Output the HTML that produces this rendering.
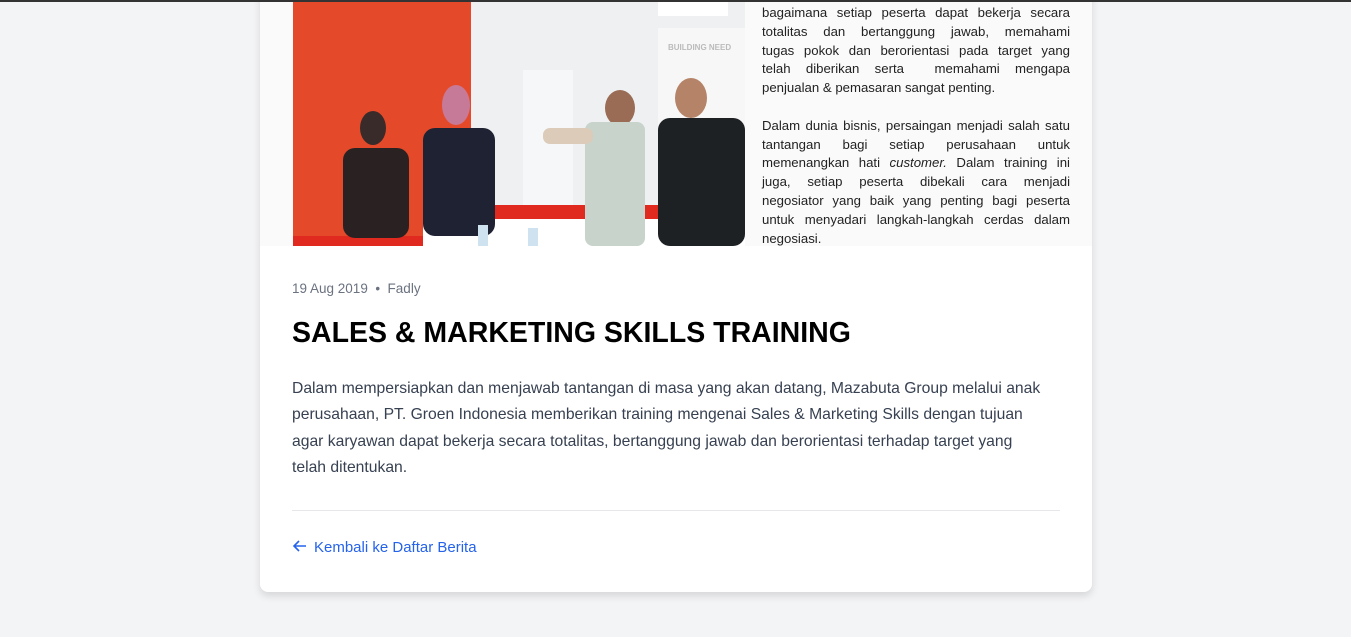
<!DOCTYPE html>
<html><head><meta charset="utf-8"><style>
*{margin:0;padding:0;box-sizing:border-box}
body{width:1351px;height:637px;background:#f3f4f6;font-family:"Liberation Sans",sans-serif;position:relative;overflow:hidden}
.topbar{position:absolute;left:0;top:0;width:1351px;height:2px;background:#333;z-index:5}
.card{position:absolute;left:260px;top:-20px;width:832px;height:612px;background:#fff;border-radius:8px;box-shadow:0 4px 8px rgba(0,0,0,.12);overflow:hidden}
.img{position:absolute;left:0;top:20px;width:832px;height:246px;background:#fafafa}
.photo{position:absolute;left:33px;top:0;width:452px;height:246px;background:#e9ecee;overflow:hidden}
.doc{position:absolute;left:502px;top:4px;width:308px;font-size:13.2px;line-height:18.8px;color:#222;text-align:justify;text-align-last:justify;white-space:nowrap}
.doc div{display:block}
.meta{position:absolute;left:32px;top:301px;font-size:13.5px;color:#6b7280}
h1{position:absolute;left:32px;top:337px;font-size:28.5px;font-weight:700;color:#000;white-space:nowrap}
.body{position:absolute;left:32px;top:396px;font-size:15.7px;line-height:26.3px;color:#374151;white-space:nowrap}
.hr{position:absolute;left:32px;top:530px;width:768px;height:1px;background:#e5e7eb}
.link{position:absolute;left:32px;top:559px;font-size:15px;color:#2563eb}
</style></head><body>
<div class="topbar"></div>
<div class="card">
 <div class="img">
  <div class="photo">
   <svg width="452" height="246" viewBox="0 0 452 246">
    <rect x="0" y="0" width="178" height="246" fill="#e44a2a"/>
    <rect x="178" y="0" width="274" height="246" fill="#eef0f1"/>
    <rect x="365" y="28" width="87" height="160" fill="#f7f7f7"/>
    <text x="375" y="50" font-size="8" font-weight="bold" fill="#bbb" font-family="Liberation Sans">BUILDING NEED</text>
    <rect x="365" y="2" width="70" height="14" fill="#fff"/>
    <rect x="230" y="70" width="50" height="150" fill="#f6f7f8"/>
    <rect x="130" y="215" width="322" height="31" fill="#fff"/>
    <rect x="130" y="205" width="322" height="14" fill="#e02a20"/>
    <rect x="0" y="236" width="130" height="10" fill="#e02a20"/>
    <ellipse cx="80" cy="128" rx="13" ry="17" fill="#3a2b2b"/>
    <rect x="50" y="148" width="66" height="90" rx="12" fill="#2a2222"/>
    <ellipse cx="163" cy="105" rx="14" ry="20" fill="#c77a98"/>
    <rect x="130" y="128" width="72" height="108" rx="12" fill="#1f2233"/>
    <ellipse cx="327" cy="108" rx="15" ry="18" fill="#9a6b55"/>
    <rect x="292" y="122" width="60" height="124" rx="8" fill="#c8d3cc"/>
    <rect x="250" y="128" width="50" height="16" rx="7" fill="#dccbb8"/>
    <ellipse cx="398" cy="98" rx="16" ry="20" fill="#b58368"/>
    <rect x="365" y="118" width="87" height="128" rx="12" fill="#1e2124"/>
    <rect x="185" y="225" width="10" height="21" fill="#cfe2f0"/>
    <rect x="235" y="228" width="10" height="18" fill="#cfe2f0"/>
   </svg>
  </div>
  <div class="doc">
   <div>bagaimana setiap peserta dapat bekerja secara</div>
   <div>totalitas dan bertanggung jawab, memahami</div>
   <div>tugas pokok dan berorientasi pada target yang</div>
   <div>telah diberikan serta &nbsp;memahami mengapa</div>
   <div style="text-align-last:left">penjualan &amp; pemasaran sangat penting.</div>
   <div>&nbsp;</div>
   <div>Dalam dunia bisnis, persaingan menjadi salah satu</div>
   <div>tantangan bagi setiap perusahaan untuk</div>
   <div>memenangkan hati <i>customer.</i> Dalam training ini</div>
   <div>juga, setiap peserta dibekali cara menjadi</div>
   <div>negosiator yang baik yang penting bagi peserta</div>
   <div>untuk menyadari langkah-langkah cerdas dalam</div>
   <div style="text-align-last:left">negosiasi.</div>
  </div>
 </div>
 <div class="meta">19 Aug 2019 &nbsp;•&nbsp; Fadly</div>
 <h1>SALES &amp; MARKETING SKILLS TRAINING</h1>
 <div class="body">Dalam mempersiapkan dan menjawab tantangan di masa yang akan datang, Mazabuta Group melalui anak<br>perusahaan, PT. Groen Indonesia memberikan training mengenai Sales &amp; Marketing Skills dengan tujuan<br>agar karyawan dapat bekerja secara totalitas, bertanggung jawab dan berorientasi terhadap target yang<br>telah ditentukan.</div>
 <div class="hr"></div>
 <div class="link"><svg width="16" height="14" viewBox="0 0 16 14" style="vertical-align:-1px;margin-right:6px"><path d="M14 7H2M7 2L2 7l5 5" fill="none" stroke="#2563eb" stroke-width="1.6"/></svg>Kembali ke Daftar Berita</div>
</div>
</body></html>
